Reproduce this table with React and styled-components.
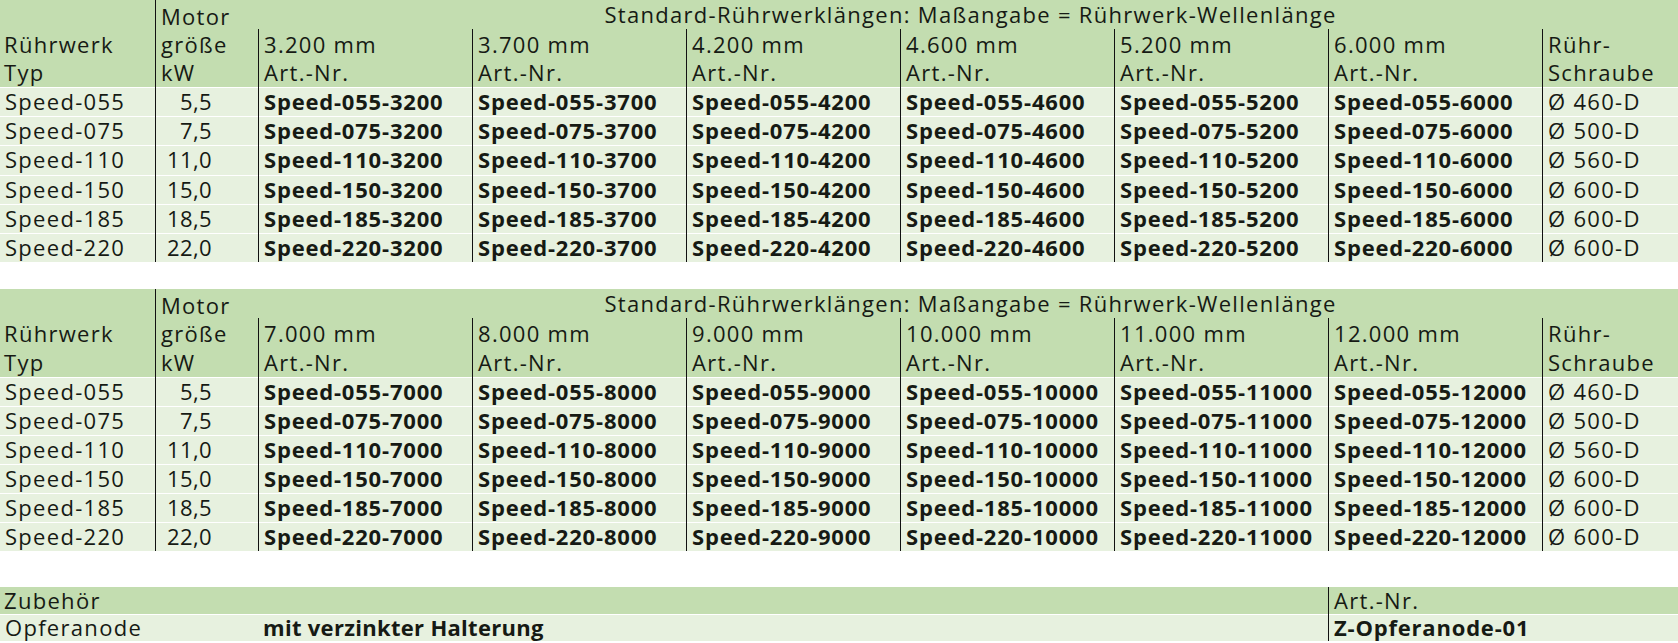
import React from "react";
import styled, { createGlobalStyle } from "styled-components";

const Global = createGlobalStyle`
  html, body {
    margin: 0;
    padding: 0;
    background: #ffffff;
  }
  body {
    font-family: "Open Sans", "Noto Sans", "Liberation Sans", sans-serif;
    color: #161a14;
  }
`;

const Page = styled.div`
  width: 1678px;
  display: flex;
  flex-direction: column;
`;

const Table = styled.div`
  display: grid;
  grid-template-columns: ${(p) => p.$cols};
  grid-auto-rows: ${(p) => p.$rowH || "29.1px"};
  margin-top: ${(p) => p.$gap || "0"};
`;

const Cell = styled.div`
  grid-column: ${(p) => p.$col || "auto"};
  grid-row: ${(p) => p.$row || "auto"};
  background: ${(p) => (p.$head ? "#c3ddb0" : "#e7f1df")};
  box-shadow: ${(p) => (p.$head ? "none" : "inset 0 1px 0 #ffffff")};
  border-left: ${(p) => (p.$line ? "1px solid #111" : "none")};
  padding: ${(p) => (p.$num ? "0 46px 0 0" : "0 0 0 5px")};
  text-align: ${(p) => (p.$num ? "right" : p.$center ? "center" : "left")};
  display: flex;
  flex-direction: column;
  justify-content: flex-end;
  font-size: 22px;
  letter-spacing: ${(p) => p.$spacing || (p.$bold ? "0.8px" : "1.3px")};
  line-height: ${(p) => p.$rowH || "29.1px"};
  font-weight: ${(p) => (p.$bold ? 700 : 500)};
  white-space: nowrap;
  &:first-child {
    padding-left: 4px;
  }
`;

const Line = styled.span`
  display: block;
  height: ${(p) => p.$rowH || "29.1px"};
  margin-top: -1px;
`;

const types = [
  { t: "055", kw: "5,5", s: "Ø 460-D" },
  { t: "075", kw: "7,5", s: "Ø 500-D" },
  { t: "110", kw: "11,0", s: "Ø 560-D" },
  { t: "150", kw: "15,0", s: "Ø 600-D" },
  { t: "185", kw: "18,5", s: "Ø 600-D" },
  { t: "220", kw: "22,0", s: "Ø 600-D" },
];

const fmt = (n) => n.toLocaleString("de-DE") + " mm";

function LengthTable({ lengths, gap }) {
  return (
    <Table $cols="155px 103px repeat(6, 214px) 1fr" $gap={gap}>
      <Cell $head $col="1" $row="1 / 4">
        <Line>Rührwerk</Line>
        <Line>Typ</Line>
      </Cell>
      <Cell $head $line $col="2" $row="1 / 4">
        <Line>Motor</Line>
        <Line>größe</Line>
        <Line>kW</Line>
      </Cell>
      <Cell $head $center $col="3 / 10" $row="1">
        <Line>Standard-Rührwerklängen: Maßangabe = Rührwerk-Wellenlänge</Line>
      </Cell>
      {lengths.map((l) => (
        <Cell key={l} $head $line $row="2 / 4">
          <Line>{fmt(l)}</Line>
          <Line>Art.-Nr.</Line>
        </Cell>
      ))}
      <Cell $head $line $row="2 / 4">
        <Line>Rühr-</Line>
        <Line>Schraube</Line>
      </Cell>
      {types.map((r) => (
        <React.Fragment key={r.t}>
          <Cell $col="1">
            <Line>Speed-{r.t}</Line>
          </Cell>
          <Cell $line $num $spacing="0.4px">
            <Line>{r.kw}</Line>
          </Cell>
          {lengths.map((l) => (
            <Cell key={l} $line $bold>
              <Line>
                Speed-{r.t}-{l}
              </Line>
            </Cell>
          ))}
          <Cell $line>
            <Line>{r.s}</Line>
          </Cell>
        </React.Fragment>
      ))}
    </Table>
  );
}

export default function App() {
  return (
    <Page>
      <Global />
      <LengthTable lengths={[3200, 3700, 4200, 4600, 5200, 6000]} />
      <LengthTable lengths={[7000, 8000, 9000, 10000, 11000, 12000]} gap="27.5px" />
      <Table $cols="258px 1070px 1fr" $rowH="27px" $gap="36px">
        <Cell $head $col="1 / 3" $rowH="27px">
          <Line $rowH="27px">Zubehör</Line>
        </Cell>
        <Cell $head $line $rowH="27px">
          <Line $rowH="27px">Art.-Nr.</Line>
        </Cell>
        <Cell $rowH="27px">
          <Line $rowH="27px">Opferanode</Line>
        </Cell>
        <Cell $bold $spacing="0.3px" $rowH="27px">
          <Line $rowH="27px">mit verzinkter Halterung</Line>
        </Cell>
        <Cell $bold $line $rowH="27px">
          <Line $rowH="27px">Z-Opferanode-01</Line>
        </Cell>
      </Table>
    </Page>
  );
}
